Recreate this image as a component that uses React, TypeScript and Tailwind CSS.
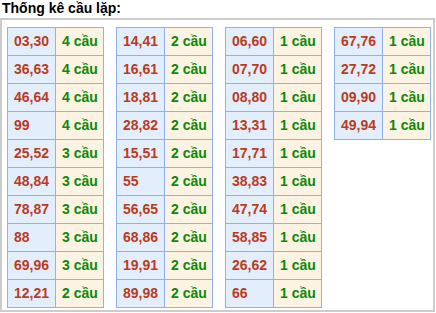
const columns: [string, string][][] = [
  [
    ['03,30', '4 cầu'],
    ['36,63', '4 cầu'],
    ['46,64', '4 cầu'],
    ['99', '4 cầu'],
    ['25,52', '3 cầu'],
    ['48,84', '3 cầu'],
    ['78,87', '3 cầu'],
    ['88', '3 cầu'],
    ['69,96', '3 cầu'],
    ['12,21', '2 cầu'],
  ],
  [
    ['14,41', '2 cầu'],
    ['16,61', '2 cầu'],
    ['18,81', '2 cầu'],
    ['28,82', '2 cầu'],
    ['15,51', '2 cầu'],
    ['55', '2 cầu'],
    ['56,65', '2 cầu'],
    ['68,86', '2 cầu'],
    ['19,91', '2 cầu'],
    ['89,98', '2 cầu'],
  ],
  [
    ['06,60', '1 cầu'],
    ['07,70', '1 cầu'],
    ['08,80', '1 cầu'],
    ['13,31', '1 cầu'],
    ['17,71', '1 cầu'],
    ['38,83', '1 cầu'],
    ['47,74', '1 cầu'],
    ['58,85', '1 cầu'],
    ['26,62', '1 cầu'],
    ['66', '1 cầu'],
  ],
  [
    ['67,76', '1 cầu'],
    ['27,72', '1 cầu'],
    ['09,90', '1 cầu'],
    ['49,94', '1 cầu'],
  ],
]

export default function App() {
  return (
    <div className="w-[436px] h-[313px] bg-white font-['Liberation_Sans',Arial,sans-serif]">
      <div className="h-[18px] pl-[2px] text-[14px] leading-[17px] font-bold text-black">
        Thống kê cầu lặp:
      </div>
      <div className="w-[435px] h-[294px] border-2 border-[#cccccc] pt-[7px] pl-[5px]">
        <div className="flex items-start gap-[12px]">
          {columns.map((rows, i) => (
            <table key={i} className="w-[97px] border-collapse border border-[#8fb2ee]">
              <tbody>
                {rows.map(([pair, count]) => (
                  <tr key={pair} className="h-[28px]">
                    <td className="w-[48px] border border-[#8fb2ee] bg-[#e3eefd] pl-[6px] p-0 text-[14px] font-bold text-[#bb3b1c]">
                      {pair}
                    </td>
                    <td className="border border-[#8fb2ee] bg-[#fdf3e2] pl-[6px] p-0 text-[14px] font-bold text-[#0b8a0b]">
                      {count}
                    </td>
                  </tr>
                ))}
              </tbody>
            </table>
          ))}
        </div>
      </div>
    </div>
  )
}
